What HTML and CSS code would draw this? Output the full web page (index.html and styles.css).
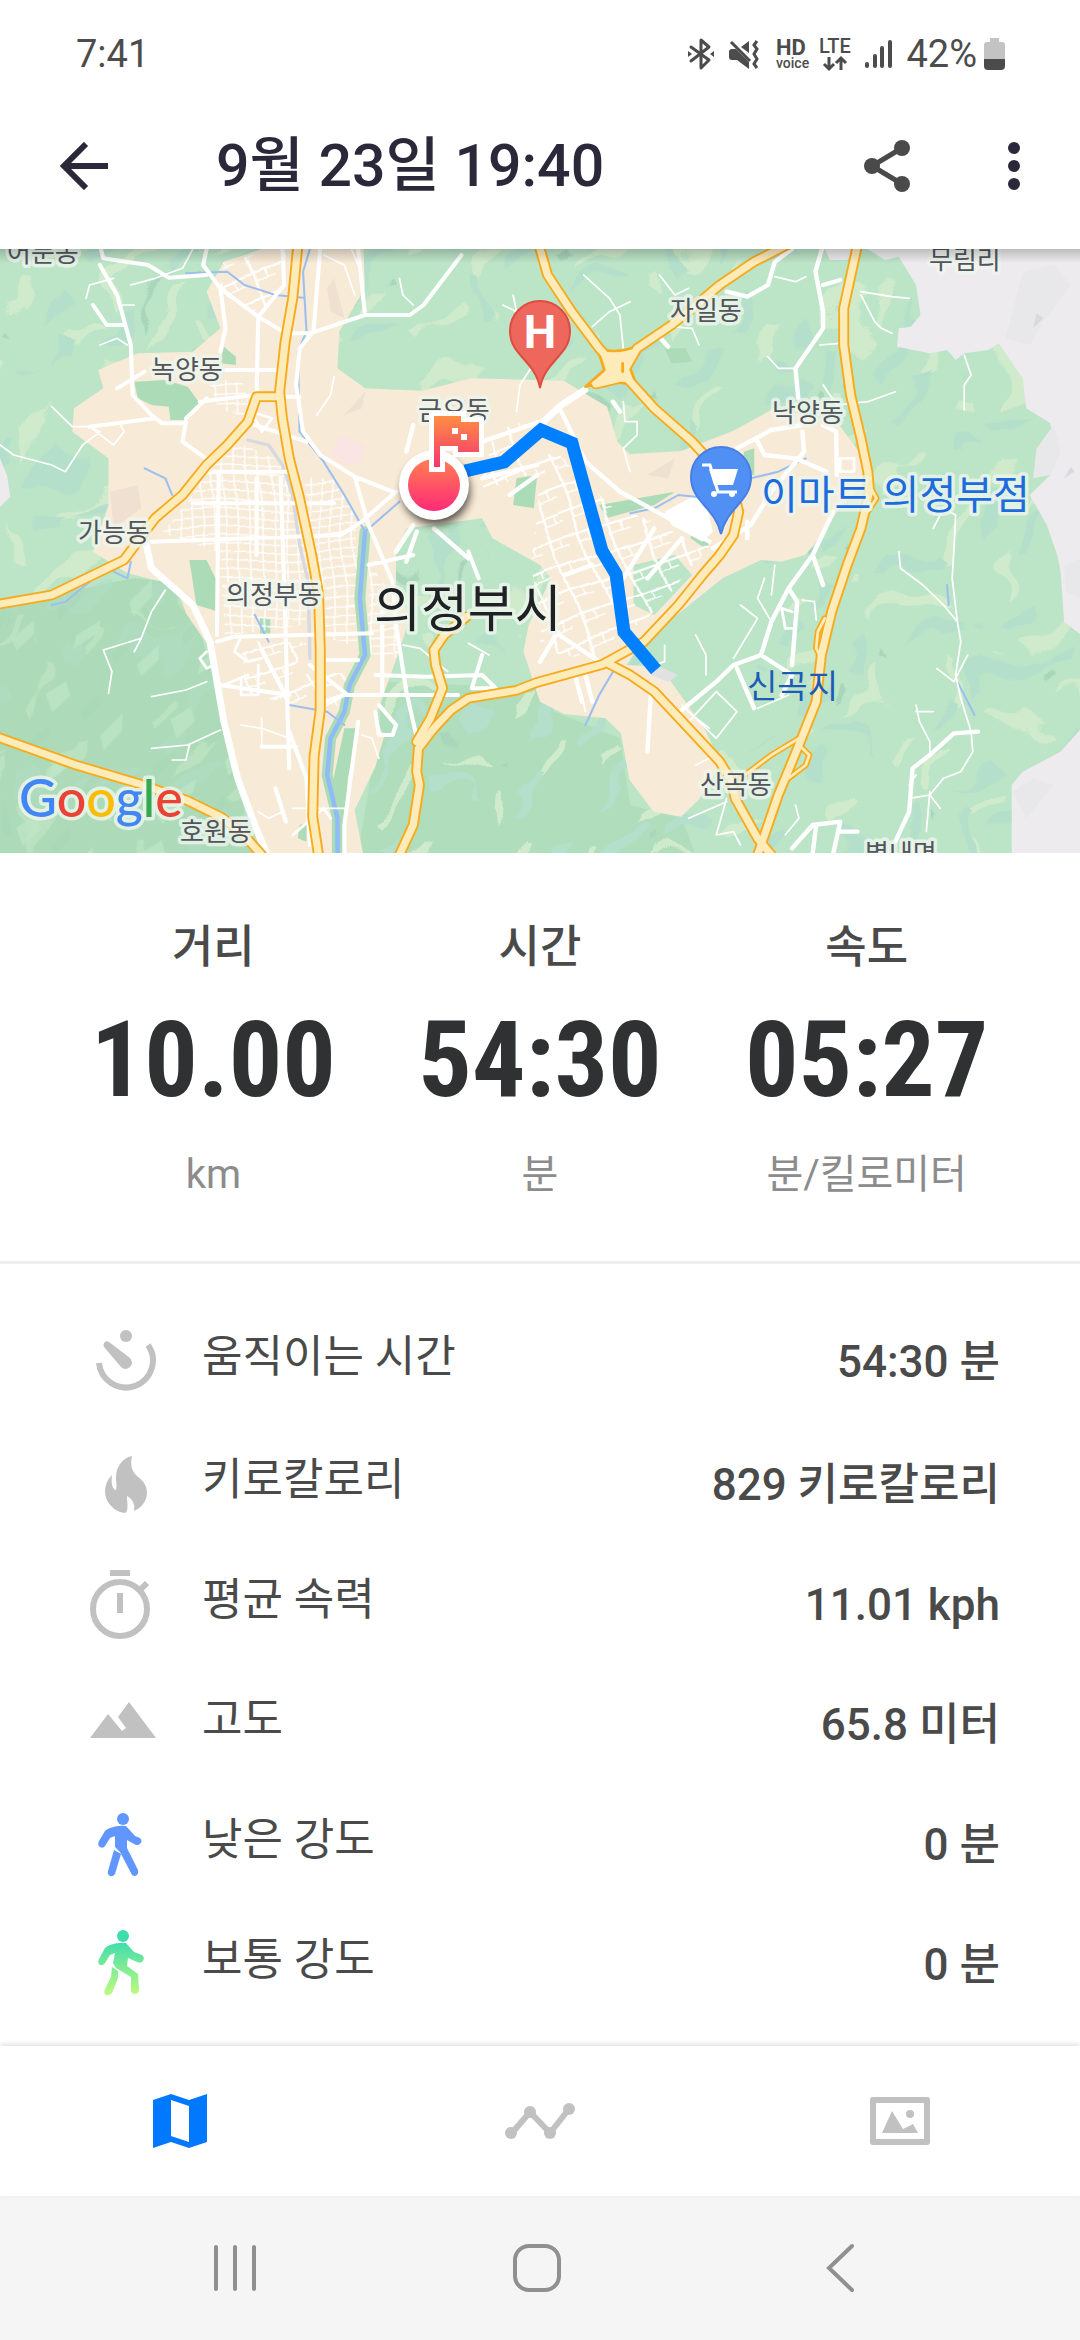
FILE: index.html
```html
<!DOCTYPE html>
<html lang="ko">
<head>
<meta charset="utf-8">
<meta name="viewport" content="width=device-width, initial-scale=1">
<title>9월 23일 19:40</title>
<link rel="stylesheet" href="styles.css">
</head>
<body>
<div class="status-bar">
  <span>7:41</span>
  <div class="status-icons">
    <svg width="28" height="32" viewBox="0 0 28 32" fill="none" stroke="currentColor" stroke-width="3" stroke-linejoin="round" stroke-linecap="round"><path d="M4 9 22 22 14 30V2L22 9 4 23"/><path d="M1 13v6l4-3zM27 13v6l-4-3z" fill="currentColor" stroke="none"/></svg>
    <svg class="gap-sound" width="30" height="32" viewBox="0 0 30 32"><path d="M20 3v12L12 9zM0 14q0-3 3-3h4L20 24v7L8 22H3q-3 0-3-3z" fill="currentColor"/><path d="M2 4 21 23M28 3l-3 4 3 4-3 5 3 5-3 5 3 4" fill="none" stroke="currentColor" stroke-width="3"/></svg>
    <svg class="gap-hd" width="34" height="32" viewBox="0 0 34 32" fill="currentColor"><text class="hd" x="1" y="17">HD</text><text class="voice" x="1" y="30">voice</text></svg>
    <svg class="gap-lte" width="34" height="34" viewBox="0 0 34 34" fill="currentColor"><text class="lte" x="0" y="16">LTE</text><path d="M10 20v11M5 27l5 5 5-5M22 33V21M17 26l5-5 5 5" fill="none" stroke="currentColor" stroke-width="3"/></svg>
    <svg class="gap-signal" width="28" height="32" viewBox="0 0 28 32" stroke="currentColor" stroke-width="4" stroke-linecap="round"><path d="M2 26v2M10 18v10M17 10v18M25 4v24"/></svg>
    <span class="percent">42%</span>
    <svg width="21" height="32" viewBox="0 0 21 32"><path d="M6 0h9v4h3q3 0 3 3v14H0V7q0-3 3-3h3z" fill="#c3c3c3"/><path d="M0 21h21v7q0 4-4 4H4q-4 0-4-4z" fill="#4c4c4c"/></svg>
  </div>
</div>

<header class="app-bar">
  <button class="icon-button" aria-label="뒤로"><svg width="48" height="48" viewBox="0 0 48 48" fill="none" stroke="currentColor" stroke-width="6"><path d="M48 24H5M26 2 4 24l22 22"/></svg></button>
  <h1>9월 23일 19:40</h1>
  <button class="icon-button share" aria-label="공유"><svg width="46" height="52" viewBox="0 0 46 52" fill="currentColor"><path d="M38 8 8 26l30 18" fill="none" stroke="currentColor" stroke-width="5"/><circle cx="38" cy="8" r="8"/><circle cx="8" cy="26" r="8"/><circle cx="38" cy="44" r="8"/></svg></button>
  <button class="icon-button" aria-label="더보기"><svg width="14" height="50" viewBox="0 0 14 50" fill="currentColor"><circle cx="7" cy="7" r="6"/><circle cx="7" cy="25" r="6"/><circle cx="7" cy="43" r="6"/></svg></button>
</header>

<main>
<svg class="map" viewBox="0 249 1080 604" preserveAspectRatio="xMidYMid slice" role="img" aria-label="의정부시 경로 지도">
  <defs>
    <linearGradient id="hot" x1="0" y1="0" x2="0" y2="1"><stop offset="0" stop-color="#ff7f50"/><stop offset="1" stop-color="#ff2a78"/></linearGradient>
    <linearGradient id="flag" x1="0" y1="0" x2="0" y2="1"><stop offset="0" stop-color="#ff8e42"/><stop offset="1" stop-color="#f33572"/></linearGradient>
    <linearGradient id="topshade" x1="0" y1="0" x2="0" y2="1"><stop offset="0" stop-color="#000" stop-opacity=".2"/><stop offset="1" stop-color="#000" stop-opacity="0"/></linearGradient>
    <filter id="soft" x="-50%" y="-50%" width="200%" height="200%"><feGaussianBlur stdDeviation="4"/></filter>
    <filter id="rugged" filterUnits="userSpaceOnUse" x="0" y="0" width="3140" height="1840" color-interpolation-filters="sRGB"><feTurbulence type="fractalNoise" baseFrequency=".003" numOctaves="3" seed="7"/><feDisplacementMap in="SourceGraphic" scale="420" xChannelSelector="R" yChannelSelector="G"/></filter>
    <filter id="uneven" filterUnits="userSpaceOnUse" x="0" y="0" width="3140" height="1840" color-interpolation-filters="sRGB"><feTurbulence type="fractalNoise" baseFrequency=".004" numOctaves="1" seed="3"/><feDisplacementMap in="SourceGraphic" scale="70" xChannelSelector="R" yChannelSelector="G"/></filter>
    <pattern id="hills" width="610" height="470" patternUnits="userSpaceOnUse" patternTransform="rotate(-8)">
      <g fill="#cfebcc">
        <path d="M20 90l60-40 40 10-50 60-60 30zM310 160l90-60 30 10-80 80-60 20zM120 300l80-70 20 20-90 90-50 10zM420 310l60-60 50 10-70 60-60 20zM250 410l50-20 20 20-70 40zM540 400l40-50 20 10-20 60z"/>
      </g>
      <g fill="#b3dfcb">
        <path d="M90 170l90-70 30 30-60 60-90 30zM260 80l70-60 40 20-70 60zM440 190l90-60 50 10-80 60-40 40zM240 290l80-70 60 10-90 90-70 20zM40 370l60-70 20 30-50 60zM350 420l80-50 50 20-90 50z"/>
      </g>
      <path d="M380 270l30-30 10 30-30 20zM560 240l24-20 6 30z" fill="#a9d6bb"/>
    </pattern>
    <pattern id="slopes" width="370" height="410" patternUnits="userSpaceOnUse" patternTransform="rotate(12)">
      <path d="M40 60l50-50 20 40-40 60zM220 150l50-80 10 50-40 70zM90 280l60-60v40l-60 60zM280 330l50-70 10 40-40 60z" fill="#bfe6c7"/>
      <path d="M150 90l40-60 14 30-40 60zM20 210l50-60 10 20-50 80zM200 310l40-60 10 30-30 60z" fill="#a9d8b8"/>
    </pattern>
    <pattern id="blocks" width="34" height="26" patternUnits="userSpaceOnUse" patternTransform="rotate(-2)"><path d="M0 13h34M17 0v26" stroke="#fff" stroke-width="4"/></pattern>
    <pattern id="blocks-east" width="90" height="76" patternUnits="userSpaceOnUse" patternTransform="rotate(-20)"><path d="M0 26h90M33 0v76" stroke="#fff" stroke-width="7"/><path d="M33 52h57M66 26v26" stroke="#fff" stroke-width="4"/></pattern>
    <g id="highways">
      <path d="M865 0 850 160 828 290 812 440 820 520 840 640 870 760 905 930 925 1045 930 1215 930 1395 912 1535 908 1715 925 1830"/>
      <path d="M812 455H745L720 530 660 600 600 660 530 750 450 820 360 945 240 1005 150 1050 0 1077"/>
      <path d="M-10 1475 220 1560 400 1615 540 1665 640 1715 700 1760 760 1830"/>
      <path d="M1565 0 1590 90 1660 200 1740 310 1830 410 1900 490 2010 590 2090 680 2130 740 2145 800 2130 870 2090 930 2040 990 1970 1080 1870 1190 1750 1258 1560 1312 1500 1336 1360 1360 1310 1395 1260 1450 1215 1510 1210 1580 1218 1620 1200 1740 1160 1830"/>
      <path d="M2285 0 2190 50 2090 120 2010 190 1950 240 1850 310 1800 400 1730 417"/>
      <path d="M2490 0 2450 190 2450 300 2470 450 2500 580 2520 680 2525 740 2500 850 2460 960 2415 1100 2385 1230 2370 1370 2320 1500 2260 1650 2200 1830"/>
      <path d="M1760 1252 1830 1290 1900 1340 2000 1450 2090 1550 2125 1610 2135 1660 2200 1780 2240 1830"/>
      <path d="M1355 1115 1290 1170 1260 1215 1265 1260 1285 1330 1250 1420 1210 1490"/>
    </g>
    <g id="ramps">
      <path d="M2150 1600 2240 1530 2320 1480 2300 1540M2320 1500 2350 1530 2340 1560 2290 1600M2395 1120 2375 1160 2370 1210 2390 1250M2525 720 2545 760 2520 800"/>
    </g>
  </defs>
  <g transform="translate(0 245) scale(.34437 .33333)" stroke-linejoin="round">
    <rect y="0" width="3140" height="1840" fill="#bce4c7"/>
    <path d="M0 1080 150 1050 390 1000 480 1010 560 1080 620 1300 740 1830H0zM1120 1310 1568 1330 1610 1400 1800 1480 1830 1680 1980 1720 2020 1830H1040L1060 1700z" fill="#b0ddbb"/>
    <g filter="url(#rugged)">
      <rect x="-400" y="-400" width="4000" height="2700" fill="url(#hills)"/>
    </g>
    <path d="M0 1080 390 1000 480 1010 560 1080 620 1300 740 1830H0z" fill="#abdbb7" opacity=".6"/>
    <path d="M0 1080 390 1000 480 1010 560 1080 620 1300 740 1830H0z" fill="url(#slopes)" opacity=".7"/>
    <path d="M1870 1020 2100 1000 2240 960 2280 1060 2180 1260 2330 1330 2310 1440 2120 1540 1930 1310 1860 1220z" fill="#bce4c7"/>
    <g fill="#eeebef">
      <path d="M2390 0H2500L2460 45H2410zM2500 0 2570 45 2610 35 2660 120 2673 210 2645 245 2610 250 2605 305 2700 325 2750 315 2775 345 2800 325 2870 315 2900 295 2930 340 2970 400 2980 490 3050 535 3065 630 3050 690 2990 750 3040 840 3070 930 3080 980 3090 1130 3140 1170V0zM3140 1450 3080 1520 2970 1580 2938 1620V1830H3140zM0 640 20 690 30 755 0 785z"/>
    </g>
    <path d="M2970 80 3060 60 3110 120 3030 230 2990 300 2920 280zM3060 540 3080 620 3050 690 3000 700 3010 610zM2940 1640 3000 1600 3060 1620 2980 1720zM3090 960 3140 940V1060L3095 1040z" fill="#e8e7e9"/>
    <path d="M3030 220 3000 250 3010 205zM3120 680 3090 700 3110 665z" fill="#d9d9de"/>
    <path d="M650 50 780 5H1055L1060 130 985 260 980 370 1060 430 1225 437 1370 400 1568 405 1638 408 1763 485 1793 590 1828 627 1978 618 2128 558 2248 490 2430 530 2508 640 2520 700 2430 800 2380 880 2338 930 2268 950 2210 945 2098 1000 1990 1090 1860 1195 1820 1260 1918 1265 2048 1455 2088 1545 2070 1600 2028 1665 1978 1715 1898 1700 1828 1605 1803 1465 1758 1420 1638 1407 1568 1370 1520 1220 1535 1140 1600 1000 1568 960 1430 880 1400 820 1180 850 1150 920V1020L1190 1120 1150 1245 1090 1415 1115 1475 1090 1565 1030 1695 1055 1830H760L660 1515 620 1295 600 1195 540 1105 510 1020 370 985 270 920 315 780V640L210 560 215 490 300 430 285 375 400 325 560 320 640 250 600 140z" fill="#f7ead6"/>
    <path d="M1060 440 1000 510 1050 490zM320 740 400 720 410 790 330 850zM1300 480 1400 450 1380 520zM1880 690 1960 640 1940 700zM950 130 970 100 1000 220 960 200z" fill="#efe0d1"/>
    <path d="M960 630 990 570 1060 600 1050 650 1000 660z" fill="#fbe4e4"/>
    <g fill="#acdcb7">
      <path d="M390 410 480 405 545 425 580 475 540 525H495L490 485 440 480 400 460zM650 305 685 335V360L640 355zM550 945H600L635 1020V1100L570 1080zM755 1120H785V1165H755zM870 1740 890 1735V1790L865 1780zM1000 1450 1040 1450 1010 1600 1000 1740 960 1640zM2010 850 2065 885 2050 912 2005 880zM1500 700 1560 690 1550 790 1490 780zM2160 620 2190 610V690H2160zM1740 780 1960 740 1900 780 1760 820zM1930 310H1990L2010 350 1950 355z"/>
    </g>
    <path d="M1840 960 1960 930 2010 990 1900 1110 1840 1080z" fill="#bce4c7"/>
    <g filter="url(#uneven)">
      <path d="M700 590 810 640 850 780 900 930 890 1120 650 1170 640 930 470 860zM870 690 960 700 1050 820 1040 1200 940 1160z" fill="url(#blocks)"/>
      <path d="M1070 950 1150 1080 1160 1240 1060 1220zM590 410 700 430 730 520 620 500z" fill="url(#blocks)"/>
      <path d="M660 40 820 20 820 150 740 200 640 130zM850 1290 1000 1290 990 1400 700 1350 700 1180 900 1180z" fill="url(#blocks-east)"/>
      <path d="M1568 640 1640 640 1770 780 1920 840 2060 900 1900 1100 1740 1240 1568 1200 1550 960zM1450 560 1560 520 1540 700 1400 740z" fill="url(#blocks-east)"/>
    </g>
    <path d="M1930 800 2010 755 2050 770 2070 860 2040 890 1950 840z" fill="#fff"/>
    <g fill="none" stroke-linecap="round">
      <path d="M1060 860 1045 1060 1060 1230 1015 1320 1000 1400 960 1480 950 1590 980 1720 980 1830" stroke="#acdcb7" stroke-width="32"/>
      <path d="M1060 860 1045 1060 1060 1230 1015 1320 1000 1400 960 1480 950 1590 980 1720 980 1830" stroke="#90bbf7" stroke-width="13"/>
      <path d="M900 12 880 80 890 260 865 320 870 560 940 650 1000 750 1060 860 1160 770M540 85 660 80 710 120 800 150 880 158M740 1110 780 1190M1780 1280 1740 1350 1700 1440M2780 1310 2830 1410M2750 1020 2755 1080M1830 805 1900 790 1970 750 2060 760M2180 700 2260 680 2340 640M840 1380 950 1400 1000 1440M420 670 480 700 500 750M330 980 370 1000 380 950M150 1080 190 1070 260 1010" stroke="#9dbff0" stroke-width="6"/>
      <path d="M720 585 780 600 820 660 850 750 870 900 895 1010 900 1240" stroke="#d6dae0" stroke-width="10"/>
    </g>
    <g fill="none" stroke="#fff" stroke-linecap="round">
      <path stroke-width="5" d="M2770 915 2765 1000 2780 1130 2790 1190 2775 1290 2790 1360 2820 1460 2825 1520 2790 1580 2740 1600 2700 1650 2640 1660M2610 920 2615 970 2680 1020 2740 1080 2780 1130M2770 915 2775 810 2740 790 2710 850M2800 330 2820 390 2800 420 2800 495M2660 1380 2670 1430 2700 1490 2700 1520M2660 1400H2710M2720 1270 2770 1310 2810 1230M2020 1170 2050 1230 2050 1290M1930 1200V1250L1900 1260M480 1035 440 1100 410 1180 300 1215 325 1280 315 1345M410 1180 390 1220M440 1355 540 1335 600 1310M440 1510 545 1500 640 1455M500 1545H540L550 1500M0 600 40 630 150 660 190 680 240 600 290 560 260 545M150 485 210 545 260 545 330 600 360 560 350 540M290 300 340 280 370 300M250 160 260 120 330 100M380 120 450 100 530 70 560 12M350 180 390 180M1695 90 1770 160 1800 210 1810 310M1720 245 1770 200 1830 170M1915 90 1960 150 2000 130M2500 140 2590 155 2640 160M2500 150 2540 230 2560 250 2590 265M2440 295 2380 300M2230 335 2260 370 2310 370M2390 420 2430 480 2520 470 2600 440M1810 470 1815 530 1850 530 1850 570 1810 610 1830 680M1950 245 2010 250 2030 300M2250 95 2310 110 2340 95M1160 100 1170 150 1200 180M1020 12 1040 60M940 30 1000 60 1030 150M2700 1650 2730 1690M2700 1640 2690 1760M2640 1620 2660 1590M2310 1680 2320 1720 2280 1770M2020 1560 2060 1540M2000 1720 2110 1670M2110 1660 2080 1770 2130 1760 2150 1800M2130 1240 2200 1120 2150 1080M2240 1050 2250 960M2240 1130 2200 1060 2220 1000M2200 1390 2290 1350M2010 1410 2060 1450M1980 1380 2080 1480 2140 1400 2080 1340 2000 1430M2330 1065 2365 1070 2370 1125M1170 1200 1220 1210 1300 1280M1360 1195 1420 1230M1050 1470 1080 1480 1100 1540M700 1440 760 1450 840 1480M760 1420V1500M820 1700 780 1720 750 1700M850 1690 1000 1690M1430 590 1440 640 1400 700M1690 1350 1700 1400M1460 180 1500 200 1490 150M1560 340 1510 420 1500 500M970 395 960 450 920 510"/>
      <path stroke-width="12" d="M600 12 590 60 640 130 750 215 830 265 900 265 1060 210 1190 210 1230 180 1340 30M290 0 300 40 430 60 490 98 600 90M290 60 340 150 380 300 385 450 440 510 470 535 540 535M270 180 310 240 360 240M260 545 450 520M640 130 655 250 640 320M750 215 745 450M930 12 910 260 870 310 860 420 880 560 930 630 1030 695 1070 840 1140 1010 1150 1140 1180 1340 1215 1500M820 12 825 120 750 215M1040 12 1060 210M340 430 420 380M580 470 740 450M650 375 810 375M540 520 600 460M540 530 530 590 610 650M820 455H870M620 680H840M560 775H970M440 890 990 870 1050 830 1150 740M635 680 630 1170M745 700V930M815 700 830 1180 835 1400M740 540 890 590M1030 695 1140 740M630 1190 680 1175 1080 1165M930 1245H1040M640 1320 840 1350M940 1370 1000 1350H1330M760 1215 830 1350M900 1260 1010 1350M1040 1430 1000 1740V1824M840 1460 890 1600 900 1800M760 1505H860M835 1400 840 1570M1090 1290 1240 1295 1400 1290 1440 1330 1370 1330 1400 1230M1360 920 1390 1000M1100 1380 1150 1440 1140 1470H1100L1090 1400M1070 960 1200 930M1110 1100V1340M800 1630 830 1730"/>
      <path stroke-width="13" d="M2390 0 2368 80 2390 200V250L2310 370 2318 460M2390 120 2440 105M2300 12 2250 50 2230 120 2170 155 2110 140M1630 500 1700 650 1800 740 1960 830 2060 890M2140 610 2240 555 2330 540M2195 580 2220 630 2310 640 2400 680M2390 540 2428 560 2430 690M2330 560 2335 620 2240 740 2180 840 2070 910M2170 830V880M2420 800 2360 930 2290 1030 2240 1130 2210 1230 2130 1260 2080 1310 1980 1395M2290 1030 2315 1070 2300 1260M2140 1270 2190 1390M2210 1230 2300 1290 2270 1350M2360 930 2390 1020M2840 1460 2770 1465 2700 1530 2650 1570 2640 1700 2600 1790M1890 1345 1880 1520M1610 1160 1740 1250M1568 1250 1620 1160M1400 590 1568 530M1400 700 1560 660M1200 540 1180 620M1200 840 1150 920M1260 850 1360 940M1210 860 1180 950M1640 990 1720 960M1700 1290 1720 1370M1670 1290 1690 1370M1910 270 1940 305M2300 1810 2360 1740 2440 1730 2420 1824M2370 1740 2360 1824M2440 1760 2490 1760M1900 850 1810 1000M1980 880 1880 1000M1480 750 1560 690M1780 470 1800 500"/>
      <path stroke-width="20" d="M425 900 440 970 560 1080 610 1190 625 1280 650 1430 690 1600 740 1740 780 1840M1698 435 1630 480 1568 540M1960 1100 2060 970"/>
      <path stroke-width="8" d="M600 1220 580 1240 600 1270 620 1260M2440 640H2480V680H2440zM2300 1100 2270 1090 2280 1150 2300 1150M700 1175 680 1220 720 1250 760 1240M700 1300 700 1350 750 1350V1260M650 1320 720 1290M850 1770 940 1690 960 1720M730 500 790 520 760 560z"/>
    </g>
    <g fill="none" stroke-linecap="round">
      <use href="#ramps" stroke="#f9ab1a" stroke-width="18"/>
      <use href="#highways" stroke="#f7ab1c" stroke-width="32"/>
      <path d="M1735 310Q1790 330 1860 300L1830 370 1850 425Q1790 400 1700 425L1755 375z" fill="#feebba" stroke="#f7ab1c" stroke-width="8"/>
      <use href="#ramps" stroke="#feebba" stroke-width="8"/>
      <use href="#highways" stroke="#feebba" stroke-width="21"/>
      <path d="M1808 355v25" stroke="#f7ab1c" stroke-width="8"/>
    </g>
    <path d="M1910 1262 1970 1290 1940 1310 1890 1290z" fill="#dfe1e2"/>
  </g>
  <g class="place">
    <text x="7" y="262">어둔동</text><text x="151" y="379">녹양동</text><text x="78" y="542">가능동</text>
    <text x="418" y="420">금오동</text><text x="670" y="320">자일동</text><text x="772" y="422">낙양동</text>
    <text x="929" y="269">무림리</text><text x="226" y="604">의정부동</text><text x="180" y="841">호원동</text>
    <text x="700" y="794">산곡동</text><text x="865" y="863">별내면</text>
  </g>
  <text class="city" x="374" y="627">의정부시</text>
  <text class="poi" x="761" y="509">이마트 의정부점</text>
  <text class="pond" x="747" y="698">신곡지</text>
  <text class="logo" x="19" y="817"><tspan fill="#4285f4">G</tspan><tspan fill="#ea4335">o</tspan><tspan fill="#fbbc05">o</tspan><tspan fill="#4285f4">g</tspan><tspan fill="#34a853">l</tspan><tspan fill="#ea4335">e</tspan></text>
  <path d="M540 388C535 360 510 356 510 331a30 30 0 0 1 60 0C570 356 545 360 540 388z" fill="#ee675c" stroke="#df4b3f" stroke-width="2"/>
  <text class="pin-letter" x="540" y="348">H</text>
  <path d="M721 534C715 507 691 502 691 477a30 30 0 0 1 60 0C751 502 727 507 721 534z" fill="#508ff4" stroke="#477fe6" stroke-width="2"/>
  <path d="M702 465h8l8 27h19" fill="none" stroke="#fff" stroke-width="3"/><path d="M709 469h29l-5 16h-19z" fill="#fff"/><circle cx="714" cy="494" r="3" fill="#fff"/><circle cx="732" cy="494" r="3" fill="#fff"/>
  <path d="M465 471 504 462 541 430 572 443 602 551 616 574 624 632 656 670" fill="none" stroke="#0080ff" stroke-width="13"/>
  <circle cx="436" cy="491" r="34" fill="#000" opacity=".65" filter="url(#soft)"/>
  <circle cx="434" cy="485" r="35" fill="#fff"/><circle cx="434" cy="485" r="26" fill="url(#hot)"/>
  <path d="M434 416h27v6h18v30h-21v-6h-18v21h-6z" fill="url(#flag)" stroke="#fff" stroke-width="10" paint-order="stroke"/>
  <path d="M452 428h6v6h-6zM461 434h6v6h-6z" fill="#fff"/>
  <rect y="249" width="1080" height="14" fill="url(#topshade)"/>
</svg>

<section class="stats" aria-label="요약">
  <div class="stat"><h2>거리</h2><strong>10.00</strong><span>km</span></div>
  <div class="stat"><h2>시간</h2><strong>54:30</strong><span>분</span></div>
  <div class="stat"><h2>속도</h2><strong>05:27</strong><span>분/킬로미터</span></div>
</section>

<dl class="details">
  <div class="detail">
    <svg width="72" height="72" viewBox="0 0 72 72" fill="none" stroke="#c1c1c1" stroke-width="6"><path d="M15 37a27 27 0 1 0 49-18"/><circle cx="42" cy="10" r="6" fill="#c1c1c1" stroke="none"/><path d="M20 17q2-3 5-1l21 16q4 5 0 9-5 4-9 0L20 21q-1-2 0-4z" fill="#c1c1c1" stroke="none"/></svg>
    <dt>움직이는 시간</dt><dd>54:30 분</dd>
  </div>
  <div class="detail">
    <svg width="72" height="72" viewBox="0 0 72 72" fill="#c1c1c1"><path d="M48 7C38 9 31 19 32 31q1 7 0 10c-4-1-5-7-4-15-9 9-8 20-4 27 4 6 9 10 17 11 4-2 2-10 2-17 7 4 8 10 7 15 11-5 15-15 12-24-2-6-7-9-10-12-4-4-6-10-4-19z"/></svg>
    <dt>키로칼로리</dt><dd>829 키로칼로리</dd>
  </div>
  <div class="detail">
    <svg width="72" height="72" viewBox="0 0 72 72" fill="none" stroke="#c1c1c1" stroke-width="6"><circle cx="36" cy="40" r="27"/><path d="M26 4h20M36 24v20M57 20l6-6"/></svg>
    <dt>평균 속력</dt><dd>11.01 kph</dd>
  </div>
  <div class="detail">
    <svg width="72" height="72" viewBox="0 0 72 72" fill="#c1c1c1"><path d="M45 13 34 28l8 11-4 3-14-17L6 49h66z"/></svg>
    <dt>고도</dt><dd>65.8 미터</dd>
  </div>
  <div class="detail">
    <svg width="72" height="72" viewBox="0 0 72 72" fill="#6096fd"><circle cx="39" cy="10" r="6"/><path d="M26 19q8-3 16-2l9 10 5 2q3 3 0 6-3 2-6 0l-7-4v8l11 22q1 5-3 6-3 0-4-3L36 43l-5-5V27l-5 2-5 8q-2 3-5 1-3-2-1-6l6-10q2-2 5-3z"/><path d="m30 41 7 4-6 20q-2 3-5 2-3-2-2-5z"/></svg>
    <dt>낮은 강도</dt><dd>0 분</dd>
  </div>
  <div class="detail">
    <svg width="72" height="72" viewBox="0 0 72 72" fill="url(#jog)"><defs><linearGradient id="jog" gradientUnits="userSpaceOnUse" x1="0" y1="12" x2="0" y2="66"><stop offset="0" stop-color="#3fdcae"/><stop offset="1" stop-color="#befb7d"/></linearGradient></defs><circle cx="39" cy="7" r="6"/><path d="M26 16q8-3 16-2l8 9 8 3q3 2 1 6-2 3-6 1l-9-4-1 8 11 8 1 16q-1 4-4 4-4 0-4-4V48L32 39l-3-5 2-10-5 2-5 8q-2 3-5 2-3-2-1-6l6-11q2-2 5-3z"/><path d="m28 38 6 4v7l-6 15q-3 3-6 2-3-2-1-6l6-12z"/></svg>
    <dt>보통 강도</dt><dd>0 분</dd>
  </div>
</dl>
</main>

<nav class="tabs" aria-label="보기">
  <button class="tab active" aria-label="지도"><svg width="54" height="54" viewBox="0 0 54 54" fill="currentColor" fill-rule="evenodd"><path d="M0 6 18 0l18 6L54 0v48l-18 6-18-6-18 6zM18 6v36l18 6V12z"/></svg></button>
  <button class="tab" aria-label="그래프"><svg width="70" height="54" viewBox="0 0 70 54" fill="currentColor"><path d="M7 39 25 18l20 21L64 15" fill="none" stroke="currentColor" stroke-width="6"/><circle cx="6" cy="39" r="6"/><circle cx="25" cy="18" r="6"/><circle cx="45" cy="39" r="6"/><circle cx="64" cy="15" r="6"/></svg></button>
  <button class="tab" aria-label="사진"><svg width="60" height="54" viewBox="0 0 60 54" fill="currentColor"><path d="M3 6h54v42H3z" fill="none" stroke="currentColor" stroke-width="6" stroke-linejoin="round"/><path d="m12 39 10-22 11 18 10-5 5 9z"/><circle cx="40" cy="20" r="4"/></svg></button>
</nav>

<div class="system-nav">
  <button aria-label="최근 앱"><svg width="48" height="50" viewBox="0 0 48 50" stroke="currentColor" stroke-width="4" stroke-linecap="round"><path d="M5 4v42M24 4v42M43 4v42"/></svg></button>
  <button aria-label="홈"><svg width="50" height="50" viewBox="0 0 50 50" fill="none" stroke="currentColor" stroke-width="4"><rect x="3" y="3" width="44" height="44" rx="14"/></svg></button>
  <button aria-label="뒤로"><svg width="30" height="50" viewBox="0 0 30 50" fill="none" stroke="currentColor" stroke-width="4" stroke-linecap="round"><path d="M27 3 4 25l23 22"/></svg></button>
</div>
</body>
</html>
```
FILE: styles.css
```css
* { box-sizing: border-box; }

body {
  margin: 0;
  min-height: 100vh;
  display: flex;
  flex-direction: column;
  background: #fff;
  color: #4a4a4a;
  font-family: Roboto, "Noto Sans CJK KR", sans-serif;
}

svg { display: block; flex: none; }

button {
  display: flex;
  align-items: center;
  justify-content: center;
  padding: 0;
  border: 0;
  background: none;
  color: inherit;
}

.status-bar {
  display: flex;
  align-items: center;
  justify-content: space-between;
  height: 107px;
  padding: 0 75px 0 76px;
  color: #4c4c4c;
  font-size: 38px;
  line-height: 40px;
}

.status-icons { display: flex; align-items: center; }
.status-icons svg { overflow: visible; }
.gap-sound { margin-left: 14px; }
.gap-hd { margin-left: 16px; }
.gap-lte { margin-left: 10px; }
.gap-signal { margin-left: 12px; }
.percent { margin: 0 7px 0 13px; }
.hd { font-size: 22px; font-weight: 700; }
.voice { font-size: 14px; font-weight: 500; }
.lte { font-size: 20px; font-weight: 500; }

.app-bar {
  display: flex;
  align-items: center;
  height: 142px;
  padding: 0 59px 24px 60px;
  color: #2b2939;
}

.app-bar h1 {
  flex: 1;
  margin: 0 0 0 108px;
  font-size: 59px;
  font-weight: 500;
  line-height: 72px;
}

.share { margin-right: 97px; color: #4a4a4a; }

main { flex: 1; }

.map { width: 100%; height: 604px; font-family: "Noto Sans CJK KR", sans-serif; }
.map text { paint-order: stroke; stroke-linejoin: round; stroke: #eef6ee; stroke-opacity: .8; stroke-width: 7px; }
.place { font-size: 26px; fill: #51555b; }
.map .city { font-size: 51px; fill: #202124; }
.map .poi { font-size: 40px; fill: #1d6bdc; }
.map .pond { font-size: 33px; fill: #1c5cb8; stroke: none; }
.map .logo { font-family: Lato, sans-serif; font-size: 52px; font-weight: 500; }
.map .pin-letter { font-family: Roboto, sans-serif; font-size: 46px; font-weight: 700; fill: #fff; stroke: none; text-anchor: middle; }

.stats {
  display: grid;
  grid-template-columns: repeat(3, 1fr);
  padding: 63px 50px 51px;
  border-bottom: 3px solid #efefef;
}

.stat { display: flex; flex-direction: column; align-items: center; }
.stat h2 { margin: 0; font-size: 45px; font-weight: 500; line-height: 64px; }
.stat strong {
  color: #303133;
  font-family: "Roboto Condensed", "Liberation Sans Narrow", Roboto, sans-serif;
  font-size: 106px;
  line-height: 160px;
}
.stat span { color: #8c8c8c; font-size: 40px; line-height: 70px; }

.details { margin: 0; padding: 35px 80px 0 84px; }
.detail { display: flex; align-items: center; height: 120px; font-size: 44px; line-height: 60px; }
.detail:first-child { height: 126px; }
.detail dt { flex: 1; margin-left: 46px; padding-bottom: 10px; }
.detail dd { margin: 0; font-weight: 500; }

.tabs {
  position: sticky;
  bottom: 0;
  display: grid;
  grid-template-columns: repeat(3, 1fr);
  height: 150px;
  background: #fff;
  box-shadow: 0 -2px 5px rgba(0, 0, 0, .12);
}
.tab { color: #c1c1c1; }
.tab.active { color: #0079ff; }

.system-nav {
  display: grid;
  grid-template-columns: repeat(3, 1fr);
  height: 144px;
  padding: 0 89px 0 84px;
  background: #f5f5f5;
  color: #909090;
}
```
